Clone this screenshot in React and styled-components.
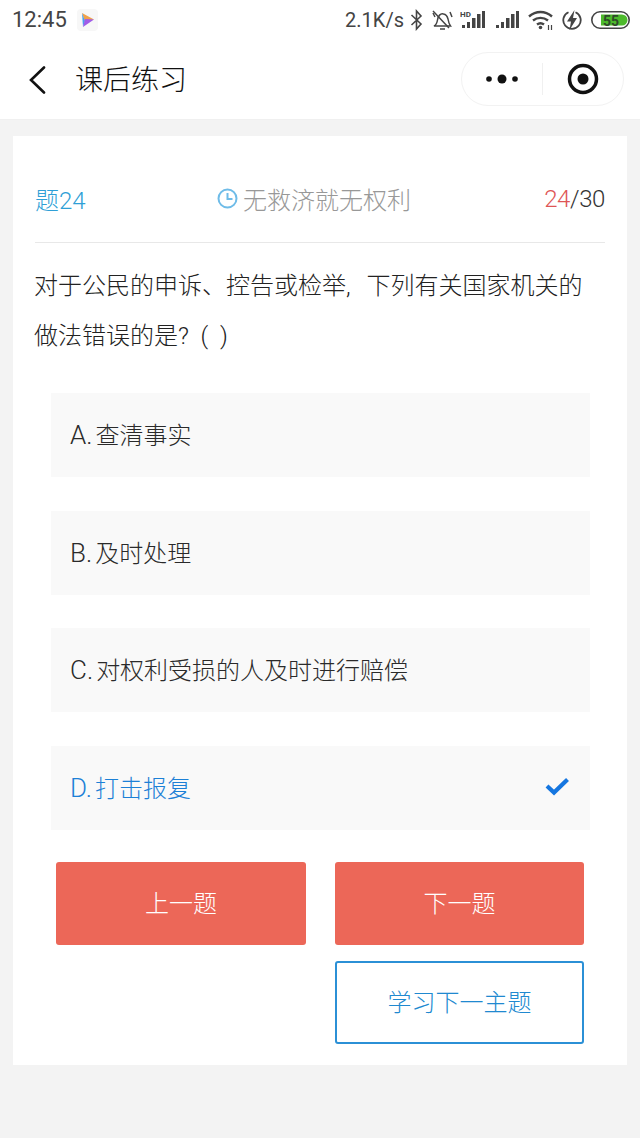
import styled, { createGlobalStyle } from "styled-components";

const FONT = `Roboto, "Noto Sans CJK SC", sans-serif`;

const GlobalStyle = createGlobalStyle`
  html, body { margin: 0; padding: 0; background: #f3f3f3; }
  body { font-family: ${FONT}; }
`;

const Page = styled.div`
  width: 640px;
  height: 1138px;
  overflow: hidden;
  background: #f3f3f3;
`;

const Header = styled.div`
  height: 120px;
  background: #fff;
  border-bottom: 1px solid #f0f0f0;
  box-sizing: border-box;
`;

const StatusBar = styled.div`
  height: 40px;
  display: flex;
  align-items: center;
  padding: 0 10px 0 12px;
  color: #444;
`;

const Time = styled.span`
  font-size: 22px;
  line-height: 40px;
  margin-right: 10px;
`;

const StatusRight = styled.div`
  margin-left: auto;
  display: flex;
  align-items: center;
`;

const Speed = styled.span`
  font-size: 20px;
  margin-right: 6px;
`;

const NavBar = styled.div`
  height: 80px;
  display: flex;
  align-items: center;
  padding: 0 16px 0 29px;
`;

const NavTitle = styled.span`
  font-size: 28px;
  line-height: 36px;
  font-weight: 300;
  color: #111;
  margin: 1px 0 0 29px;
`;

const Capsule = styled.div`
  margin: -2px 0 0 auto;
  width: 163px;
  height: 54px;
  box-sizing: border-box;
  border: 1px solid #f2f2f2;
  border-radius: 27px;
  display: flex;
  align-items: center;
`;

const CapsuleHalf = styled.div`
  flex: 1;
  display: flex;
  align-items: center;
  justify-content: center;
`;

const CapsuleLine = styled.div`
  width: 1px;
  height: 32px;
  background: #f0f0f0;
`;

const Card = styled.div`
  width: 614px;
  height: 929px;
  margin: 16px 0 0 13px;
  background: #fff;
  box-sizing: border-box;
  padding: 0 22px;
`;

const TopRow = styled.div`
  height: 107px;
  box-sizing: border-box;
  border-bottom: 1px solid #e8e8e8;
  display: grid;
  grid-template-columns: 182px auto 1fr;
  align-items: center;
  font-size: 24px;
  font-weight: 300;
  padding-top: 19px;
`;

const QuestionNo = styled.span`
  color: #2f9fd6;
`;

const Topic = styled.span`
  display: flex;
  align-items: center;
  gap: 5px;
  color: #989898;
`;

const Progress = styled.span`
  justify-self: end;
  color: #333;
  letter-spacing: -0.4px;
`;

const Current = styled.span`
  color: #de5555;
`;

const Question = styled.div`
  margin: 18px 0 32px -1px;
  font-size: 24px;
  font-weight: 300;
  line-height: 50px;
  color: #222;
`;

const QuestionComma = styled.span`
  margin-right: 10px;
`;

const Options = styled.div`
  margin: 0 -1px 0 16px;
  width: 539px;
  display: flex;
  flex-direction: column;
  gap: 33.5px;
`;

const Option = styled.div`
  height: 84px;
  box-sizing: border-box;
  background: #f9f9f9;
  display: flex;
  align-items: center;
  justify-content: space-between;
  padding: 0 21px 3px 19px;
  font-size: 24px;
  font-weight: 300;
  color: ${(p) => (p.$selected ? "#1c80d6" : "#2a2a2a")};
`;

const OptionMark = styled.span`
  font-size: 26px;
  margin-right: 3px;
`;

const Actions = styled.div`
  margin: 32px 0 0 21px;
  width: 528px;
  display: grid;
  grid-template-columns: 250px 249px;
  column-gap: 29px;
  row-gap: 16px;
`;

const Button = styled.div`
  height: 83px;
  box-sizing: border-box;
  border-radius: 3px;
  display: flex;
  align-items: center;
  justify-content: center;
  padding-bottom: 3px;
  font-size: 24px;
  font-weight: 300;
  color: ${(p) => (p.$outline ? "#2089d0" : "#fff")};
  background: ${(p) => (p.$outline ? "#fff" : "#ec6758")};
  border: ${(p) => (p.$outline ? "2px solid #2b90d6" : "none")};
  grid-column: ${(p) => (p.$outline ? 2 : "auto")};
`;

const BackIcon = () => (
  <svg width="17" height="28" viewBox="0 0 17 28" fill="none">
    <path d="M15 1.500 2 14 15 26.500" stroke="#111" strokeWidth="2.600" strokeLinecap="round" />
  </svg>
);

const PlayIcon = () => (
  <svg width="21" height="22" viewBox="0 0 21 22">
    <rect width="21" height="22" rx="4" fill="#f7f7f7" />
    <path d="M5 4 17 10.500 8 13Z" fill="#f0a24a" />
    <path d="M5 4 8 12 6 18Z" fill="#4aa0ee" />
    <path d="M17 10.500 6 18 8 10Z" fill="#a05ce8" />
  </svg>
);

const Bluetooth = () => (
  <svg width="13" height="22" viewBox="0 0 13 22" fill="none" stroke="#444" strokeWidth="1.600">
    <path d="M1.500 6 11 15 6.500 20V2L11 7 1.500 16" />
  </svg>
);

const MutedBell = () => (
  <svg width="21" height="22" viewBox="0 0 21 22" fill="none" stroke="#444" strokeWidth="1.500" style={{ marginLeft: 9 }}>
    <path d="M2 17c2-1 3-3 3.500-6 .5-4 3-7 6-6 3 .5 4 3 4.500 5 .5 3 1 5 2.500 7Z" />
    <path d="M8 20h5M1 2l16 17M18 3l2 5M3 8 1 4" />
  </svg>
);

const Signal = ({ hd }) => (
  <svg width="25" height="20" viewBox="0 0 25 20" fill="#444" style={{ marginLeft: hd ? 7 : 9 }}>
    <rect x="2" y="15" width="3" height="3" />
    <rect x="7" y="12" width="3" height="6" />
    <rect x="12" y="8" width="3.500" height="10" />
    <rect x="17" y="4" width="3.500" height="14" />
    <rect x="22" y="1" width="3" height="17" />
    {hd && (
      <text x="0" y="7" fontSize="8" fontWeight="700" fontFamily="Roboto, sans-serif">
        HD
      </text>
    )}
  </svg>
);

const Wifi = () => (
  <svg width="25" height="20" viewBox="0 0 25 20" fill="none" stroke="#444" strokeWidth="2.400" style={{ marginLeft: 9 }}>
    <path d="M1 6.500c7-6 16-6 23 0M5 10.500c4.500-3.500 10.500-3.500 15 0M9 14.500c2-1.500 5-1.500 7 0" />
    <circle cx="12.500" cy="17.500" r="1.800" fill="#444" stroke="none" />
    <path d="M20.500 15v5M23.500 15v5" strokeWidth="1.200" />
  </svg>
);

const Charging = () => (
  <svg width="20" height="20" viewBox="0 0 20 20" style={{ marginLeft: 9 }}>
    <path d="M6.500 2.200a8.700 8.700 0 1 0 7 0" fill="none" stroke="#444" strokeWidth="1.800" />
    <path d="M12.500 0 5 11.500h4L7.500 20 15 8h-4Z" fill="#444" />
  </svg>
);

const Battery = () => (
  <svg width="39" height="18" viewBox="0 0 39 18" style={{ marginLeft: 9 }}>
    <rect x="0.800" y="0.800" width="37.400" height="16.400" rx="8.200" fill="#fff" stroke="#444" strokeWidth="1.600" />
    <path d="M10 3.500h21a5.500 5.500 0 0 1 0 11H10Z" fill="#4dba2c" />
    <text x="12" y="14.500" fontSize="14" fontWeight="700" fill="#2f4a2a" fontFamily="Roboto, sans-serif">
      55
    </text>
  </svg>
);

const MoreDots = () => (
  <svg width="34" height="12" viewBox="0 0 34 12" fill="#111">
    <circle cx="4" cy="6" r="2.800" />
    <circle cx="17" cy="6" r="4.500" />
    <circle cx="30" cy="6" r="2.800" />
  </svg>
);

const CloseTarget = () => (
  <svg width="32" height="32" viewBox="0 0 32 32">
    <circle cx="16" cy="16" r="13.500" fill="none" stroke="#111" strokeWidth="3.500" />
    <circle cx="16" cy="16" r="5.500" fill="#111" />
  </svg>
);

const ClockIcon = () => (
  <svg width="21" height="21" viewBox="0 0 21 21" fill="none" stroke="#6fbce8" strokeWidth="2">
    <circle cx="10.500" cy="10.500" r="9" />
    <path d="M10.500 5v6h5" />
  </svg>
);

const CheckIcon = () => (
  <svg width="24" height="19" viewBox="0 0 24 19" fill="none">
    <path d="M2 9 9 15.500 22.500 2.500" stroke="#1576e0" strokeWidth="4.200" />
  </svg>
);

const options = [
  { id: "A", text: "查清事实" },
  { id: "B", text: "及时处理" },
  { id: "C", text: "对权利受损的人及时进行赔偿" },
  { id: "D", text: "打击报复", selected: true },
];

export default function App() {
  return (
    <Page>
      <GlobalStyle />
      <Header>
        <StatusBar>
          <Time>12:45</Time>
          <PlayIcon />
          <StatusRight>
            <Speed>2.1K/s</Speed>
            <Bluetooth />
            <MutedBell />
            <Signal hd />
            <Signal />
            <Wifi />
            <Charging />
            <Battery />
          </StatusRight>
        </StatusBar>
        <NavBar>
          <BackIcon />
          <NavTitle>课后练习</NavTitle>
          <Capsule>
            <CapsuleHalf>
              <MoreDots />
            </CapsuleHalf>
            <CapsuleLine />
            <CapsuleHalf>
              <CloseTarget />
            </CapsuleHalf>
          </Capsule>
        </NavBar>
      </Header>
      <Card>
        <TopRow>
          <QuestionNo>题24</QuestionNo>
          <Topic>
            <ClockIcon />
            无救济就无权利
          </Topic>
          <Progress>
            <Current>24</Current>/30
          </Progress>
        </TopRow>
        <Question>
          对于公民的申诉、控告或检举<QuestionComma>, </QuestionComma>下列有关国家机关的
          <br />
          做法错误的是? &nbsp;( &nbsp;)
        </Question>
        <Options>
          {options.map((o) => (
            <Option key={o.id} $selected={o.selected}>
              <span>
                <OptionMark>{o.id}.</OptionMark>
                {o.text}
              </span>
              {o.selected && <CheckIcon />}
            </Option>
          ))}
        </Options>
        <Actions>
          <Button>上一题</Button>
          <Button>下一题</Button>
          <Button $outline>学习下一主题</Button>
        </Actions>
      </Card>
    </Page>
  );
}
